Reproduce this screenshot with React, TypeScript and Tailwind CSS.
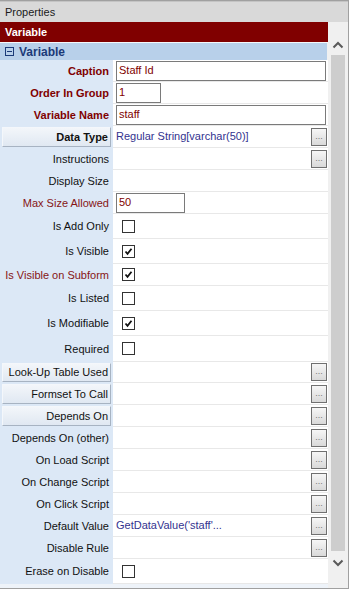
import React from "react";

type Row = {
  label: string;
  tone: "bold" | "red" | "plain" | "button" | "buttonBold";
  kind: "input" | "text" | "check" | "empty";
  value?: string;
  checked?: boolean;
  inputW?: string;
  dots?: boolean;
  h: string;
};

const rows: Row[] = [
  { label: "Caption", tone: "bold", kind: "input", value: "Staff Id", inputW: "w-[210px]", h: "h-[22px]" },
  { label: "Order In Group", tone: "bold", kind: "input", value: "1", inputW: "w-[45px]", h: "h-[22px]" },
  { label: "Variable Name", tone: "bold", kind: "input", value: "staff", inputW: "w-[210px]", h: "h-[22px]" },
  { label: "Data Type", tone: "buttonBold", kind: "text", value: "Regular String[varchar(50)]", dots: true, h: "h-[22px]" },
  { label: "Instructions", tone: "plain", kind: "empty", dots: true, h: "h-[22px]" },
  { label: "Display Size", tone: "plain", kind: "empty", h: "h-[22px]" },
  { label: "Max Size Allowed", tone: "red", kind: "input", value: "50", inputW: "w-[69px]", h: "h-[22px]" },
  { label: "Is Add Only", tone: "plain", kind: "check", checked: false, h: "h-[25px]" },
  { label: "Is Visible", tone: "plain", kind: "check", checked: true, h: "h-[25px]" },
  { label: "Is Visible on Subform", tone: "red", kind: "check", checked: true, h: "h-[22px]" },
  { label: "Is Listed", tone: "plain", kind: "check", checked: false, h: "h-[25px]" },
  { label: "Is Modifiable", tone: "plain", kind: "check", checked: true, h: "h-[25px]" },
  { label: "Required", tone: "plain", kind: "check", checked: false, h: "h-[26px]" },
  { label: "Look-Up Table Used", tone: "button", kind: "empty", dots: true, h: "h-[21px]" },
  { label: "Formset To Call", tone: "button", kind: "empty", dots: true, h: "h-[22px]" },
  { label: "Depends On", tone: "button", kind: "empty", dots: true, h: "h-[22px]" },
  { label: "Depends On (other)", tone: "plain", kind: "empty", dots: true, h: "h-[22px]" },
  { label: "On Load Script", tone: "plain", kind: "empty", dots: true, h: "h-[22px]" },
  { label: "On Change Script", tone: "plain", kind: "empty", dots: true, h: "h-[22px]" },
  { label: "On Click Script", tone: "plain", kind: "empty", dots: true, h: "h-[22px]" },
  { label: "Default Value", tone: "plain", kind: "text", value: "GetDataValue('staff'...", dots: true, h: "h-[22px]" },
  { label: "Disable Rule", tone: "plain", kind: "empty", dots: true, h: "h-[22px]" },
  { label: "Erase on Disable", tone: "plain", kind: "check", checked: false, h: "h-[25px]" },
];

const Label = ({ row }: { row: Row }) => {
  if (row.tone === "button" || row.tone === "buttonBold") {
    return (
      <div className="w-[113px] shrink-0 flex py-[1px] px-[2px]">
        <div
          className={`flex-1 flex items-center justify-end pr-[2px] border border-[#a7b3c2] border-t-[#f4f7fb] border-l-[#f4f7fb] bg-gradient-to-b from-[#f3f6fa] to-[#e0e8f2] text-[#111] ${
            row.tone === "buttonBold" ? "font-bold" : ""
          }`}
        >
          {row.label}
        </div>
      </div>
    );
  }
  const color =
    row.tone === "bold"
      ? "text-[#800000] font-bold"
      : row.tone === "red"
      ? "text-[#861515]"
      : "text-[#111]";
  return (
    <div className={`w-[113px] shrink-0 flex items-center justify-end pr-[4px] ${color}`}>
      {row.label}
    </div>
  );
};

const Dots = () => (
  <div className="w-[16px] h-[18px] mr-[1px] shrink-0 border border-[#707070] bg-gradient-to-b from-[#f6f6f6] to-[#d9d9d9] flex items-end justify-center pb-[4px] text-[9px] leading-none text-[#7a7a7a]">
    ...
  </div>
);

const Check = ({ on }: { on?: boolean }) => (
  <div className="ml-[6px] w-[13px] h-[13px] border border-[#333] bg-white flex items-center justify-center">
    {on && (
      <svg width="11" height="11" viewBox="0 0 11 11">
        <path d="M2.5 5.5 L4.5 7.8 L8.5 2.8" fill="none" stroke="#111" strokeWidth="1.8" />
      </svg>
    )}
  </div>
);

const Value = ({ row }: { row: Row }) => (
  <div className="flex-1 flex items-center pl-[3px] border-b border-[#e8e8e8] bg-white">
    <div className="flex-1 flex items-center min-w-0">
      {row.kind === "input" && (
        <div className={`${row.inputW} h-[20px] border border-[#7a7a7a] bg-white flex items-center px-[2px] text-[#800000]`}>
          {row.value}
        </div>
      )}
      {row.kind === "text" && <span className="text-[#33338f] truncate">{row.value}</span>}
      {row.kind === "check" && <Check on={row.checked} />}
    </div>
    {row.dots && <Dots />}
  </div>
);

const Chevron = ({ up }: { up?: boolean }) => (
  <svg width="12" height="8" viewBox="0 0 12 8">
    <path d={up ? "M1.5 6.5 L6 2 L10.5 6.5" : "M1.5 1.5 L6 6 L10.5 1.5"} fill="none" stroke="#5a5a5a" strokeWidth="2" />
  </svg>
);

export default function App() {
  return (
    <div className="w-[352px] h-[592px] bg-white font-['Liberation_Sans',Arial,sans-serif] text-[11px]">
      <div className="w-[349px] h-[589px] border-t border-r border-b border-[#a0a0a0] flex flex-col bg-[#f0f0f0]">
        <div className="h-[21px] shrink-0 bg-[#d9d9d9] border-t border-[#c4c4c4] flex items-center pl-[5px] text-[#1a1a1a]">
          Properties
        </div>
        <div className="flex flex-1 min-h-0">
          <div className="w-[328px] flex flex-col">
            <div className="h-[20px] shrink-0 bg-[#800000] flex items-center pl-[5px] text-white font-bold">
              Variable
            </div>
            <div className="h-[1px] bg-[#f4f7fb]" />
            <div className="h-[17px] shrink-0 bg-[#b8d0ea] flex items-center pl-[5px] gap-[5px] text-[12px] font-bold text-[#1b3a78] mr-[1px]">
              <div className="w-[9px] h-[9px] border border-[#1b3a78] flex items-center justify-center">
                <div className="w-[5px] h-[1px] bg-[#1b3a78]" />
              </div>
              Variable
            </div>
            <div className="flex flex-col bg-[#dce8f6]">
              {rows.map((row) => (
                <div key={row.label} className={`flex ${row.h}`}>
                  <Label row={row} />
                  <Value row={row} />
                </div>
              ))}
            </div>
            <div className="flex-1 bg-[#eef3f9]" />
          </div>
          <div className="flex-1 flex flex-col items-center bg-[#f0f0f0] pt-[19px] pb-[21px]">
            <Chevron up />
            <div className="w-[14px] flex-1 bg-[#cdcdcd] mt-[6px] mb-[8px]" />
            <Chevron />
          </div>
        </div>
      </div>
    </div>
  );
}
